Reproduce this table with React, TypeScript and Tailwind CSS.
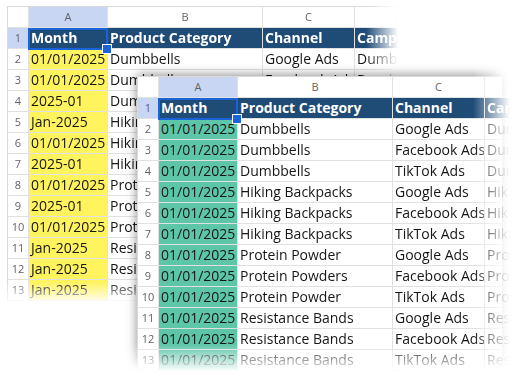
import React from "react";

const backA = [
  "01/01/2025",
  "01/01/2025",
  "2025-01",
  "Jan-2025",
  "01/01/2025",
  "2025-01",
  "01/01/2025",
  "2025-01",
  "01/01/2025",
  "Jan-2025",
  "Jan-2025",
  "Jan-2025",
];
const frontA = Array.from({ length: 12 }, () => "01/01/2025");
const products = [
  "Dumbbells",
  "Dumbbells",
  "Dumbbells",
  "Hiking Backpacks",
  "Hiking Backpacks",
  "Hiking Backpacks",
  "Protein Powder",
  "Protein Powders",
  "Protein Powder",
  "Resistance Bands",
  "Resistance Bands",
  "Resistance Bands",
];
const channels = products.map(
  (_, i) => ["Google Ads", "Facebook Ads", "TikTok Ads"][i % 3]
);
const campaigns = products.map((p, i) => `${p} ${channels[i].split(" ")[0]}`);

function Sheet({ colA, aBg }: { colA: string[]; aBg: string }) {
  const cell =
    "h-[21px] border-r border-b border-[#e1e1e1] overflow-hidden whitespace-nowrap";
  const head =
    "h-[21px] border-r border-b border-[#e1e1e1] flex items-center justify-center text-[11px] text-[#5f6368]";
  const num =
    "h-[21px] border-r border-b border-[#e1e1e1] flex items-center justify-center text-[11px] text-[#5f6368]";
  const data = "px-[2px] text-[14px] leading-[20px] text-[#161616]";
  const title =
    "px-[2px] text-[14px] leading-[20px] font-bold text-white bg-[#1f4b77]";

  return (
    <div className="relative grid grid-cols-[21px_79px_155px_92px_90px] border-t border-l border-[#dadada] bg-white font-['Open_Sans',sans-serif]">
      <div className={head} />
      <div className={`${head} bg-[#c8d6f3]`}>A</div>
      <div className={head}>B</div>
      <div className={head}>C</div>
      <div className={head}>D</div>

      <div className={`${num} bg-[#c8d6f3]`}>1</div>
      <div className={`${cell} ${title}`}>Month</div>
      <div className={`${cell} ${title}`}>Product Category</div>
      <div className={`${cell} ${title}`}>Channel</div>
      <div className={`${cell} ${title}`}>Campaign</div>

      {colA.map((a, i) => (
        <React.Fragment key={i}>
          <div className={num}>{i + 2}</div>
          <div className={`${cell} ${data} ${aBg}`}>{a}</div>
          <div className={`${cell} ${data}`}>{products[i]}</div>
          <div className={`${cell} ${data}`}>{channels[i]}</div>
          <div className={`${cell} ${data}`}>{campaigns[i]}</div>
        </React.Fragment>
      ))}

      {/* selected cell A1 */}
      <div className="absolute left-[20px] top-[21px] h-[22px] w-[80px] border-2 border-[#1b63d9]" />
      <div className="absolute left-[95px] top-[38px] h-[8px] w-[8px] bg-[#1b63d9] outline outline-1 outline-white" />
    </div>
  );
}

export default function App() {
  return (
    <div className="relative h-[378px] w-[514px] overflow-hidden bg-white">
      <div className="h-[305px] w-[400px] [mask-image:linear-gradient(to_right,#000_366px,transparent_398px)]">
        <div className="h-full w-full pl-[7px] pt-[6px] [mask-image:linear-gradient(to_bottom,#000_282px,transparent_304px)]">
          <Sheet colA={backA} aBg="bg-[#fff35e]" />
        </div>
      </div>

      <div className="absolute left-[125px] top-[64px] h-[314px] w-[389px] [mask-image:linear-gradient(to_right,#000_348px,transparent_385px)]">
        <div className="h-full w-full p-3 [mask-image:linear-gradient(to_bottom,#000_280px,transparent_308px)]">
          <div className="shadow-[0_-1px_10px_rgba(0,0,0,0.45)]">
            <Sheet colA={frontA} aBg="bg-[#5dc6a9]" />
          </div>
        </div>
      </div>
    </div>
  );
}
